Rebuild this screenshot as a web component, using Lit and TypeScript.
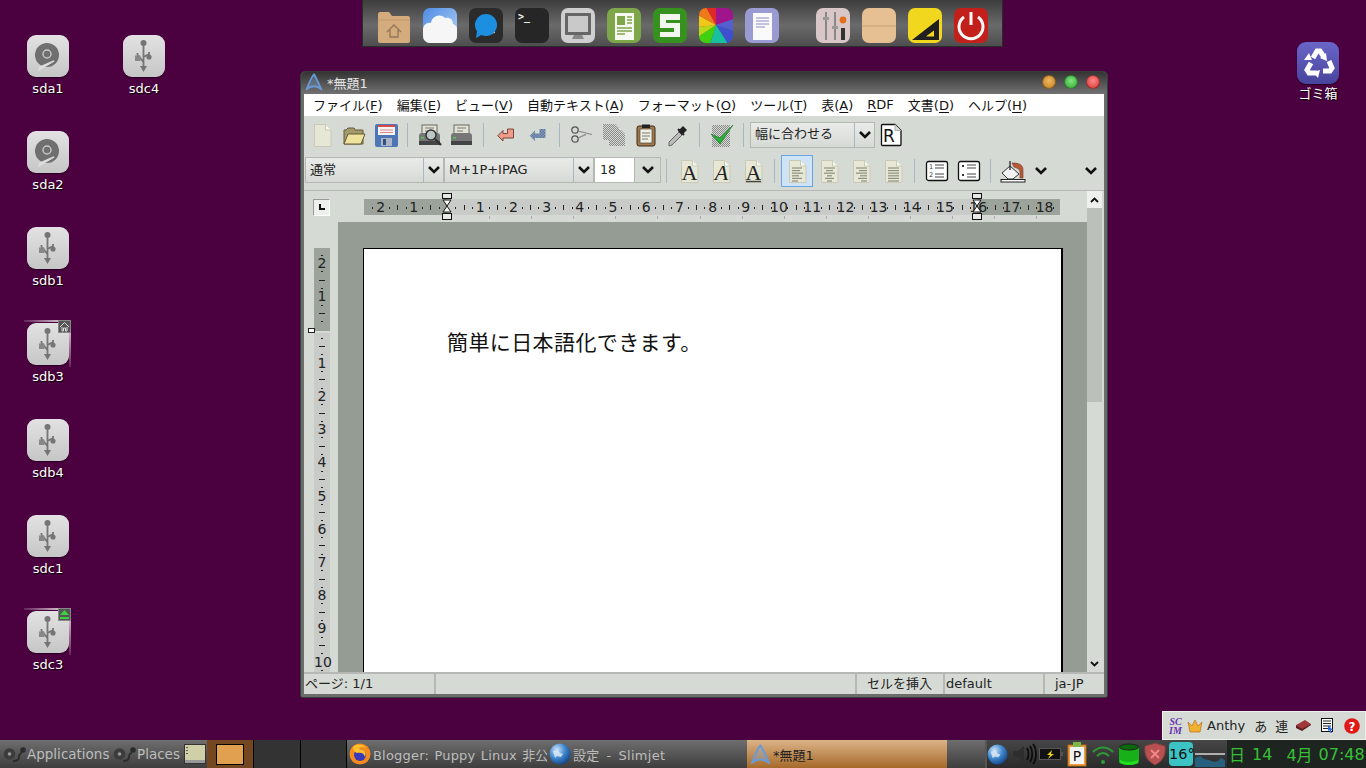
import { LitElement, html, css, svg } from "lit";
import { customElement } from "lit/decorators.js";

const I = (w: number, h: number, body: unknown, vb = `0 0 ${w} ${h}`) =>
  html`<svg width=${w} height=${h} viewBox=${vb} style="display:block;flex:none">${body}</svg>`;

const usb = svg`<g fill="#757575" stroke="#757575"><circle cx="20.5" cy="8" r="3" stroke="none"/>
<path d="M20.5 9V33M20.5 27L14.5 20V18M20.5 22L26 19V17" fill="none" stroke-width="1.8"/>
<rect x="12" y="20.5" width="5.5" height="5.5" stroke="none" fill="#888"/><circle cx="26" cy="22" r="2.6" stroke="none"/>
<path d="M17 31H24L20.5 37Z" stroke="none"/></g>`;
const hdd = svg`<circle cx="20" cy="20" r="12" fill="#6f6f6f"/><circle cx="20" cy="19" r="4" fill="none" stroke="#c8c8c8" stroke-width="1.4"/>
<path d="M12 35L27 26L13 32Z" fill="#ddd" stroke="#ddd" stroke-width="1.4"/>`;

const deskIcons = [
  { n: "sda1", x: 27, y: 35, g: hdd },
  { n: "sda2", x: 27, y: 131, g: hdd },
  { n: "sdb1", x: 27, y: 227, g: usb },
  { n: "sdb3", x: 27, y: 323, g: usb, b: "home" },
  { n: "sdb4", x: 27, y: 419, g: usb },
  { n: "sdc1", x: 27, y: 515, g: usb },
  { n: "sdc3", x: 27, y: 611, g: usb, b: "eject" },
  { n: "sdc4", x: 123, y: 35, g: usb },
];

const rr = (fill: string, stroke = "none") => svg`<rect x="1" y="1" width="34" height="35" rx="7" fill=${fill} stroke=${stroke}/>`;
const dock = [
  svg`<path d="M2 7a2 2 0 0 1 2-2h9l3 4h16a2 2 0 0 1 2 2v23a2 2 0 0 1-2 2H4a2 2 0 0 1-2-2z" fill="#d3ab7c"/><path d="M2 13h32" stroke="#c39a6b"/><path d="M11 25l7-7 7 7M14 23v7h8v-7" fill="none" stroke="#94775a" stroke-width="1.4"/>`,
  svg`<defs><linearGradient id="dk1" x1="0" y1="0" x2="1" y2="1"><stop offset="0" stop-color="#4d8be4"/><stop offset="1" stop-color="#b7d4f4"/></linearGradient></defs>${rr("url(#dk1)")}<path d="M1 29V23c0-5 4-8 8-7 1-7 9-10 14-5 5-1 8 2 8 6 3 1 4 3 4 5v7a7 7 0 0 1-7 7H8a7 7 0 0 1-7-7z" fill="#f6f6f6"/>`,
  svg`${rr("#2b2b2b")}<path d="M24 16L27 26l-6 1z" fill="#ddd"/><circle cx="18" cy="18" r="11" fill="#1d8fe0"/><path d="M9 24l-1 7 7-4z" fill="#1d8fe0"/>`,
  svg`${rr("#262626")}<text x="4" y="13" font-family="DejaVu Sans Mono" font-size="10" font-weight="bold" fill="#eee">&gt;_</text>`,
  svg`${rr("#cfcfcf")}<rect x="5" y="6" width="26" height="22" rx="1" fill="#666"/><rect x="8" y="9" width="20" height="16" fill="#c9c9c9"/><path d="M14 28h8l2 4H12z" fill="#888"/>`,
  svg`${rr("#7ea74a")}<rect x="9" y="6" width="19" height="27" fill="#f8f8f2"/><rect x="11" y="9" width="8" height="9" fill="#7ea74a"/><path d="M21 10h5M21 13h5M21 16h5M11 21h15M11 24h15M11 27h8" stroke="#7ea74a" stroke-width="1.3"/>`,
  svg`${rr("#37911e")}<path d="M8 7H28V13H14V16H28V30H8V25H22V21H8Z" fill="#f2f6ee"/>`,
  svg`<defs><clipPath id="dk8"><rect x="1" y="1" width="34" height="35" rx="7"/></clipPath></defs><g clip-path="url(#dk8)"><path d="M18 18L18 0H36V12Z" fill="#a0148c"/><path d="M18 18L36 12V24Z" fill="#5560d0"/><path d="M18 18L36 24V37H30Z" fill="#3e4fd0"/><path d="M18 18L30 37H12Z" fill="#18c0a0"/><path d="M18 18L12 37H0V30Z" fill="#40d010"/><path d="M18 18L0 30V20Z" fill="#b8d818"/><path d="M18 18L0 20V8Z" fill="#f0c818"/><path d="M18 18L0 8V0H8Z" fill="#f07818"/><path d="M18 18L8 0H18Z" fill="#e02828"/></g>`,
  svg`${rr("#9b9bd3")}<rect x="9" y="6" width="19" height="27" fill="#fafafa"/><path d="M12 11h13M12 14h13M12 17h13M12 20h9" stroke="#8a8ac4" stroke-width="1.2"/>`,
  svg`${rr("#d9c6c6")}<path d="M11 5v28M20 5v28" stroke="#888" stroke-width="2"/><rect x="8" y="10" width="6" height="3" fill="#999"/><rect x="17" y="19" width="6" height="3" fill="#999"/><circle cx="28" cy="13" r="3.4" fill="#e0701c"/><rect x="26" y="21" width="4" height="12" fill="#333"/>`,
  svg`${rr("#e6bf92")}<path d="M1 19h34" stroke="#c9a277"/>`,
  svg`${rr("#f1d81e")}<path d="M5 33L32 12V33Z M20 29h7v-5z" fill="#1f1f1f" fill-rule="evenodd"/><path d="M19 29.5h8v-6z" fill="#f1d81e"/>`,
  svg`${rr("#c4201b")}<path d="M11 10a12 12 0 1 0 14 0" fill="none" stroke="#f8f8f8" stroke-width="3"/><path d="M18 5v13" stroke="#f8f8f8" stroke-width="3"/>`,
];

const page = (inner: unknown = "") => svg`<path d="M4.5 1.5H15.5L21 7V23.5H4.5Z" fill="#e7e7d6" stroke="#c9c9b6"/><path d="M15.5 1.5V7H21" fill="#f8f8f0" stroke="#c9c9b6"/>${inner}`;
const lines = (rows: [number, number][]) => svg`${rows.map(([a, b], i) => svg`<path d=${`M${a} ${9 + i * 2.6}H${b}`} stroke="#8f8f80" stroke-width="1.2"/>`)}`;
const serifA = (italic: boolean, under = false) => svg`<text x="12.5" y="20.5" text-anchor="middle" font-family="Liberation Serif" font-size="22" font-style=${italic ? "italic" : "normal"} fill="#222">A</text>${under ? svg`<path d="M5 22.5h15" stroke="#444" stroke-width="1.4"/>` : ""}`;
const checker = (id: string) => svg`<defs><pattern id=${id} width="2" height="2" patternUnits="userSpaceOnUse"><rect width="2" height="2" fill="#d6dad5"/><rect width="1" height="1" fill="#8a8a8a"/><rect x="1" y="1" width="1" height="1" fill="#8a8a8a"/></pattern></defs>`;
const printer = svg`<rect x="5" y="2" width="15" height="10" fill="#e4e4d4" stroke="#666"/><path d="M8 5h9M8 8h6" stroke="#777"/><path d="M2 13a3 3 0 0 1 3-3h15a3 3 0 0 1 3 3v7H2z" fill="#777"/><rect x="2" y="18" width="21" height="4" fill="#444"/><rect x="4" y="14" width="3" height="1.5" fill="#5c5"/>`;

const ti = {
  newdoc: I(24, 24, page()),
  open: I(24, 24, svg`<path d="M2 21V7h2l2-2h6l1 2h8v14z" fill="#a39a6c" stroke="#645c3a"/><path d="M2 21l4-10h17l-4 10z" fill="#efe29c" stroke="#645c3a"/>`),
  save: I(24, 24, svg`<rect x="1" y="1" width="23" height="23" rx="2" fill="#4e75b6"/><rect x="4" y="2" width="17" height="10" fill="#f4f4f4"/><rect x="4" y="2" width="17" height="2" fill="#d84a4a"/><path d="M6 7h13M6 9.5h13" stroke="#d88"/><rect x="7" y="15" width="11" height="8" fill="#aab4c6"/><rect x="9" y="16" width="3" height="6" fill="#34507e"/>`),
  preview: I(26, 24, svg`${printer}<circle cx="14" cy="12" r="5" fill="#bcc8c8" stroke="#333" stroke-width="1.5"/><path d="M18 16l6 6" stroke="#333" stroke-width="2.4"/>`),
  print: I(26, 24, printer),
  undo: I(18, 18, svg`<path d="M1 13l7-7v4h6V4h8v12H8v4z" fill="#ee9a88" stroke="#6c3a30" stroke-width="1.200"/>`, "0 0 24 24"),
  redo: I(18, 18, svg`<defs><pattern id="c1b" width="2" height="2" patternUnits="userSpaceOnUse"><rect width="2" height="2" fill="#9fb2cc"/><rect width="1" height="1" fill="#445f8a"/><rect x="1" y="1" width="1" height="1" fill="#445f8a"/></pattern></defs><path d="M1 13l7-7v4h6V4h8v12H8v4z" fill="url(#c1b)"/>`, "0 0 24 24"),
  cut: I(24, 24, svg`<circle cx="5" cy="7" r="3.2" fill="none" stroke="#555" stroke-width="1.3"/><circle cx="5" cy="16" r="3.2" fill="none" stroke="#555" stroke-width="1.3"/><path d="M8 8l14 3.5M8 15l8-3.6" stroke="#888" stroke-width="1.2"/>`),
  copy: I(26, 26, svg`${checker("c2")}<path d="M2 2h12l4 4v12H2z M8 8h12l4 4v12H8z" fill="url(#c2)"/>`),
  paste: I(24, 24, svg`<rect x="3" y="3" width="18" height="20" rx="2" fill="#a5794e" stroke="#3c2a18"/><rect x="6" y="6" width="12" height="14" fill="#efefe2" stroke="#333" stroke-width=".6"/><rect x="8" y="1.5" width="8" height="3.5" fill="#222"/><path d="M8 10h8M8 13h8M8 16h6" stroke="#777"/>`),
  dropper: I(24, 24, svg`<path d="M3 23l3-1 10-10-3-3L3 19z" fill="#bbb" stroke="#666"/><path d="M12 8l5-5 4 4-5 5z" fill="#222"/><path d="M12 6l6 6" stroke="#222" stroke-width="2"/>`),
  check: I(24, 26, svg`${checker("c3")}<rect x="2" y="3" width="18" height="22" fill="url(#c3)"/><path d="M1 12l9 10L23 3 10 16z" fill="#28b038" stroke="#146c20" stroke-width=".6"/>`),
  rdoc: I(22, 24, svg`<path d="M1.5 2.5a1 1 0 0 1 1-1H15l6 6v14a1 1 0 0 1-1 1H2.5a1 1 0 0 1-1-1z" fill="#fff" stroke="#111" stroke-width="1.3"/><path d="M15 1.5V7.500H21" fill="#ddd" stroke="#aaa"/><text x="3" y="19" font-family="DejaVu Sans" font-size="17" fill="#111">R</text>`),
  ab: I(24, 24, svg`${page()}${serifA(false)}`),
  ai: I(24, 24, svg`${page()}${serifA(true)}`),
  au: I(24, 24, svg`${page()}${serifA(false, true)}`),
  al: I(24, 24, page(lines([[7, 17], [7, 15], [7, 18], [7, 14], [7, 17], [7, 13]]))),
  ac: I(24, 24, page(lines([[7, 18], [9, 16], [7, 18], [10, 15], [8, 17], [10, 15]]))),
  ar: I(24, 24, page(lines([[7, 18], [10, 18], [7, 18], [11, 18], [9, 18], [12, 18]]))),
  aj: I(24, 24, page(lines([[7, 18], [7, 18], [7, 18], [7, 18], [7, 18], [7, 18]]))),
  num: I(24, 22, svg`<rect x="1.500" y="1.500" width="21" height="19" rx="2" fill="#fff" stroke="#111" stroke-width="1.3"/><text x="4" y="9" font-family="DejaVu Sans" font-size="6.500" fill="#333">1</text><text x="4" y="17" font-family="DejaVu Sans" font-size="6.500" fill="#333">2</text><path d="M10 5h9M10 8h9M10 14h9M10 17h9" stroke="#444"/>`),
  bul: I(24, 22, svg`<rect x="1.500" y="1.500" width="21" height="19" rx="2" fill="#fff" stroke="#111" stroke-width="1.3"/><path d="M5 6h2M5 15h2" stroke="#333" stroke-width="2"/><path d="M10 5h9M10 8h9M10 14h9M10 17h9" stroke="#444"/>`),
  bucket: I(26, 24, svg`<path d="M2 14l8-7 9 8-6 5H8z" fill="#f2f2f2" stroke="#333"/><path d="M10 2v9" stroke="#333" stroke-width="1.4"/><path d="M12 4c6 0 11 1 11 7v8h-3v-6c0-3-3-4-6-5z" fill="#b85a3a" stroke="#70321e" stroke-width=".6"/><rect x="1" y="20.500" width="24" height="2.500" fill="#fff" stroke="#222"/>`),
};
const chev = I(14, 10, svg`<path d="M2 2l5 5 5-5" fill="none" stroke="#111" stroke-width="2.6"/>`);

const sep = html`<span class="sep"></span>`;
const btn = (i: unknown, on = false) => html`<span class=${on ? "tb on" : "tb"}>${i}</span>`;
const menu: [string, string, string][] = [
  ["ファイル(", "F", ")"], ["編集(", "E", ")"], ["ビュー(", "V", ")"], ["自動テキスト(", "A", ")"], ["フォーマット(", "O", ")"],
  ["ツール(", "T", ")"], ["表(", "A", ")"], ["", "R", "DF"], ["文書(", "D", ")"], ["ヘルプ(", "H", ")"],
];

const globe = (id: string, s: number) => I(s, s, svg`<defs><radialGradient id=${id} cx=".35" cy=".3" r=".8"><stop offset="0" stop-color="#cfe6f8"/><stop offset=".5" stop-color="#3f86cc"/><stop offset="1" stop-color="#0d3c80"/></radialGradient></defs><circle cx="11" cy="11" r="10.500" fill=${`url(#${id})`}/><path d="M4 8l5-1 2 3 3 1-2 3-4-1-2 2z" fill="#d8e8f4" opacity=".85"/>`, "0 0 22 22");
const appA = (s: number) => I(s, s, svg`<path d="M2 20C5 12 8 5 11 1.500c3 5 6 12 9 18.500-5-5-13-5-18 0z" fill="rgba(130,175,230,.3)" stroke="#6a9ad8" stroke-width="2.200" stroke-linejoin="round"/>`, "0 0 22 22");
const mouse = I(23, 16, svg`<circle cx="6.500" cy="8" r="5.800" fill="#3c3c3c"/><circle cx="6.500" cy="8" r="1.800" fill="#999"/><path d="M10 15c3 0 6-1 6-4s2-4 3-4" fill="none" stroke="#2c2c2c" stroke-width="2"/><circle cx="20" cy="4" r="2.800" fill="#2c2c2c"/>`);

const hNums = [-2, -1, 1, 2, 3, 4, 5, 6, 7, 8, 9, 10, 11, 12, 13, 14, 15, 16, 17, 18];
const cm = 33.2;
const hTicks: { x: number; big: boolean }[] = [];
for (let i = -3; i <= 18; i++) {
  for (const [f, big] of [[0.25, false], [0.5, true], [0.75, false]] as [number, boolean][]) {
    const p = 83 + (i + f) * cm;
    if (p > 1 && p < 695) hTicks.push({ x: p, big });
  }
}
const vNums = [-2, -1, 1, 2, 3, 4, 5, 6, 7, 8, 9, 10];
const vTicks: { y: number; big: boolean }[] = [];
for (let i = -3; i <= 10; i++) {
  for (const [f, big] of [[0.25, false], [0.5, true], [0.75, false]] as [number, boolean][]) {
    const p = 81.5 + (i + f) * cm;
    if (p > 0 && p < 424) vTicks.push({ y: p, big });
  }
}
const lowTicks = Array.from({ length: 14 }, (_, i) => 125 + i * 42.1);

@customElement("app-root")
export class AppRoot extends LitElement {
  static styles = css`
    :host { display: flex; flex-direction: column; width: 1366px; height: 768px; overflow: hidden; background: #4b003f; font-family: "DejaVu Sans", "Noto Sans CJK JP", sans-serif; }
    .desktop { position: relative; flex: 1; }
    .dock { position: absolute; left: 362px; top: 0; width: 641px; height: 47px; box-sizing: border-box; display: flex; align-items: flex-start; padding: 7px 0 0 13px; gap: 10px; background: linear-gradient(#3d3d3d, #6a6a6a 55%, #4e4e4e); border: 1px solid #2b2b2b; border-top: 0; }
    .dock .gapd { width: 15px; margin-left: 0; }
    .di { position: absolute; width: 42px; }
    .tile { width: 42px; height: 42px; border-radius: 9px; background: linear-gradient(#e2e2e2, #c6c6c6); box-shadow: 0 1px 1px rgba(0,0,0,.5); }
    .di span { position: absolute; top: 45px; left: -20px; width: 82px; text-align: center; color: #fff; font-size: 13px; line-height: 17px; text-shadow: 1px 1px 1px #000; }
    .di.trash span { top: 43px; }
    .glow { position: absolute; left: -3px; top: -3px; width: 47px; height: 47px; border-top: 2px solid #d9c8d4; border-right: 2px solid #d9c8d4; box-sizing: border-box; -webkit-mask: linear-gradient(45deg, transparent 40%, #000 90%); mask: linear-gradient(45deg, transparent 40%, #000 90%); }
    .badge { position: absolute; left: 31px; top: -3px; width: 13px; height: 13px; background: #555; border: 1px solid #888; box-sizing: border-box; }
    .trash .tile { background: linear-gradient(#6a66c8, #48449c); }
    .win { position: absolute; left: 301px; top: 72px; width: 806px; height: 625px; box-sizing: border-box; background: #d6dad5; border: 3px solid #6a6d6a; border-top: 0; border-radius: 4px 4px 2px 2px; display: flex; flex-direction: column; box-shadow: 0 0 0 1px #3c3c3c; }
    .title { height: 22px; margin: 0 -3px; flex: none; box-sizing: border-box; display: flex; align-items: center; background: linear-gradient(#343434, #727272); border-radius: 4px 4px 0 0; color: #e4e4e4; font-size: 13px; padding: 0 7px 2px 4px; gap: 4px; }
    .title b { font-weight: 400; flex: 1; }
    .dot { width: 14px; height: 14px; border-radius: 50%; margin-left: 4px; flex: none; box-sizing: border-box; border: 1px solid rgba(0,0,0,.35); }
    .menu { height: 22px; flex: none; box-sizing: border-box; background: #fff; display: flex; align-items: center; gap: 14px; padding: 0 0 2px 9px; font-size: 13px; color: #111; white-space: nowrap; }
    .menu u { text-underline-offset: 2px; }
    .row { flex: none; display: flex; align-items: center; box-sizing: border-box; }
    .r1 { height: 38px; padding: 0 0 1px 2px; }
    .r2 { height: 36px; padding: 0 0 2px 1px; }
    .r2 .combo { margin-top: -2px; }
    .r2 .combo .t { margin-top: 0; }
    .tb { width: 32px; height: 32px; display: flex; align-items: center; justify-content: center; flex: none; box-sizing: border-box; }
    .tb.on { background: #cfe3f7; border: 1px solid #6aa5e0; }
    .sep { width: 1px; height: 24px; background: #a9b6c4; margin: 0 6px 0 5px; flex: none; }
    .combo { height: 26px; box-sizing: border-box; border: 1px solid #b4b8b3; background: linear-gradient(#e9ebe8, #d6dad5); display: flex; align-items: center; font-size: 13px; color: #222; flex: none; }
    .combo .t { flex: 1; padding-left: 4px; white-space: nowrap; overflow: hidden; line-height: 22px; margin-top: -2px; }
    .combo .a { width: 20px; height: 100%; display: flex; align-items: center; justify-content: center; border-left: 1px solid #a9b6c4; box-sizing: border-box; }
    .main { flex: 1; min-height: 0; display: flex; border-top: 1px solid #b5b8b4; overflow: hidden; }
    .left { flex: none; width: 783px; display: flex; flex-direction: column; }
    .hr { position: relative; height: 31px; flex: none; }
    .corner { position: absolute; left: 9px; top: 8px; width: 17px; height: 17px; box-sizing: border-box; background: #eef0ed; border: 1px solid #999; border-right-color: #fff; border-bottom-color: #fff; }
    .corner::after { content: ""; position: absolute; left: 5px; top: 4px; width: 6px; height: 6px; border-left: 2px solid #111; border-bottom: 2px solid #111; box-sizing: border-box; }
    .band { position: absolute; left: 60px; top: 8px; width: 696px; height: 16px; background: linear-gradient(90deg, #9ba39b 0 83px, #c9cbc9 83px 613px, #9ba39b 613px); font-size: 14px; color: #222; }
    .band i { position: absolute; top: 0; font-style: normal; line-height: 16px; transform: translateX(-50%); letter-spacing: 0; }
    .band s { position: absolute; width: 1px; background: #222; }
    .low { position: absolute; top: 25px; width: 1px; height: 3px; background: #aaa; }
    .marker { position: absolute; top: 2px; width: 10px; transform: translateX(-50%); }
    .body { flex: 1; min-height: 0; display: flex; }
    .vr { position: relative; width: 34px; flex: none; }
    .vband { position: absolute; left: 10px; top: 26px; width: 16px; height: 424px; background: linear-gradient(#9ba39b 0 83px, #d6dad5 83px 85px, #c9cbc9 85px); font-size: 14px; color: #222; }
    .vband i { position: absolute; left: 0; width: 16px; text-align: center; font-style: normal; line-height: 16px; transform: translateY(-50%); white-space: nowrap; }
    .vband s { position: absolute; background: #222; height: 1px; }
    .vmark { position: absolute; left: 4px; top: 106px; width: 7px; height: 5px; box-sizing: border-box; border: 1px solid #222; background: #fff; }
    .work { flex: 1; background: #949c94; padding: 26px 25px 0; overflow: hidden; }
    .page { background: #fff; height: 600px; width: 700px; box-sizing: border-box; border: 1px solid #000; border-right-width: 2px; padding: 78px 0 0 83px; font: 21px/28px "Noto Sans CJK JP", sans-serif; letter-spacing: .4px; color: #111; white-space: nowrap; }
    .sb { width: 15px; flex: none; display: flex; flex-direction: column; background: #d6dad5; }
    .sb .ar { height: 17px; display: flex; align-items: center; justify-content: center; background: #eef0ed; flex: none; }
    .sb .th { height: 194px; flex: none; background: #bcc0bb; }
    .sb .rest { flex: 1; }
    .status { height: 22px; flex: none; display: flex; border-top: 2px solid #b5b8b4; box-sizing: border-box; font-size: 13px; color: #222; }
    .status div { box-sizing: border-box; border-right: 2px solid #b5b8b4; line-height: 20px; white-space: nowrap; flex: none; }
    .ime { position: absolute; right: 0; bottom: 0; width: 204px; height: 29px; box-sizing: border-box; background: #d6dad5; border: 1px solid #eef0ed; display: flex; align-items: center; font: 13px "DejaVu Sans", "Noto Sans CJK JP", sans-serif; color: #222; white-space: nowrap; padding-left: 3px; }
    .scim { font: italic bold 10px/9px "Liberation Serif", serif; color: #6a32b0; width: 19px; text-align: center; flex: none; }
    .bar { height: 28px; flex: none; display: flex; background: linear-gradient(#6e6e6e, #3e3e3e); color: #bdbdbd; font-size: 13.500px; white-space: nowrap; }
    .bar .m { display: flex; align-items: center; gap: 1px; flex: none; box-sizing: border-box; }
    .pg { width: 47px; flex: none; background: #333; border-right: 1px solid #000; box-sizing: border-box; }
    .pg.cur { background: #754720; display: flex; align-items: center; justify-content: center; }
    .pg.cur b { display: block; width: 26px; height: 19px; background: #e0a050; border: 1px solid #000; }
    .task { width: 200px; flex: none; display: flex; align-items: center; gap: 2px; padding-left: 2px; box-sizing: border-box; overflow: hidden; letter-spacing: .2px; font-size: 13px; word-spacing: 1px; }
    .task.t2 { letter-spacing: .3px; word-spacing: 2.500px; }
    .task.act { background: linear-gradient(#dcb388, #a66a2a); color: #222; padding-left: 3px; letter-spacing: 0; }
    .tray { flex: none; width: 381px; margin-left: 38px; display: flex; align-items: center; background: linear-gradient(#464646, #2a2a2a); box-sizing: border-box; border-left: 2px solid #555; }
    .deg { width: 24px; height: 24px; background: #3cc4c4; border-radius: 4px; color: #111; font-size: 14.500px; text-align: center; line-height: 24px; flex: none; }
    .clock { flex: 1; display: flex; background: #1e2420; color: #38c038; font-size: 16px; height: 100%; align-items: center; padding-left: 2px; }
  `;

  render() {
    return html`
      <div class="desktop">
        <div class="dock">
          ${dock.map((d, i) => html`${i === 9 ? html`<span class="gapd"></span>` : ""}${I(36, 37, d)}`)}
        </div>
        ${deskIcons.map((d) => html`
          <div class="di" style=${`left:${d.x}px;top:${d.y}px`}>
            ${d.b ? html`<div class="glow"></div>` : ""}
            <div class="tile">${I(42, 42, d.g)}</div>
            ${d.b === "home" ? html`<div class="badge">${I(11, 11, svg`<path d="M1 6l4.500-4.500L10 6M3 6v4h1.500V7h2v3H8V6" fill="none" stroke="#ddd" stroke-width="1"/>`)}</div>` : ""}
            ${d.b === "eject" ? html`<div class="badge">${I(11, 11, svg`<path d="M1 6L5.500 1 10 6Z M1 8h9v2H1z" fill="#3fd03f"/>`)}</div>` : ""}
            <span>${d.n}</span>
          </div>`)}
        <div class="di trash" style="left:1297px;top:42px">
          <div class="tile">${I(42, 42, svg`<g fill="none" stroke="#fff" stroke-width="5"><path d="M16 16l4-7h3l4 6"/><path d="M32 19l3 7-2 3h-7"/><path d="M20 31h-8l-2-3 4-7"/></g><path d="M29 11l1 8-7-3zM21 36l-5-6 7-2zM7 18l8 0-3-7z" fill="#fff"/>`)}</div>
          <span>ゴミ箱</span>
        </div>

        <div class="win">
          <div class="title">
            ${appA(18)}
            <b>*無題1</b>
            <span class="dot" style="background:radial-gradient(circle at 50% 40%,#f0b860,#c08020)"></span>
            <span class="dot" style="background:radial-gradient(circle at 50% 40%,#80e880,#30a030)"></span>
            <span class="dot" style="background:radial-gradient(circle at 50% 40%,#ff8a8a,#d83030)"></span>
          </div>
          <div class="menu">
            ${menu.map(([a, u, b]) => html`<span>${a}<u>${u}</u>${b}</span>`)}
          </div>
          <div class="row r1">
            ${btn(ti.newdoc)}${btn(ti.open)}${btn(ti.save)}${sep}
            ${btn(ti.preview)}${btn(ti.print)}${sep}
            ${btn(ti.undo)}${btn(ti.redo)}${sep}
            ${btn(ti.cut)}${btn(ti.copy)}${btn(ti.paste)}${btn(ti.dropper)}${sep}
            ${btn(ti.check)}${sep}
            <div class="combo" style="width:125px"><span class="t">幅に合わせる</span><span class="a">${chev}</span></div>
            ${btn(ti.rdoc)}
          </div>
          <div class="row r2">
            <div class="combo" style="width:139px"><span class="t">通常</span><span class="a">${chev}</span></div>
            <div class="combo" style="width:150px"><span class="t">M+1P+IPAG</span><span class="a">${chev}</span></div>
            <div class="combo" style="width:67px;background:#fff"><span class="t" style="font-size:12.500px;padding-left:5px">18</span><span class="a" style="width:26px;background:#d6dad5;border-left-color:#b4b8b3">${chev}</span></div>
            <span class="sep"></span>
            ${btn(ti.ab)}${btn(ti.ai)}${btn(ti.au)}${sep}
            ${btn(ti.al, true)}${btn(ti.ac)}${btn(ti.ar)}${btn(ti.aj)}${sep}
            ${btn(ti.num)}${btn(ti.bul)}${sep}
            ${btn(ti.bucket)}
            <span class="tb" style="width:24px">${chev}</span>
            <span class="tb" style="margin-left:24px;width:28px">${chev}</span>
          </div>
          <div class="main">
            <div class="left">
              <div class="hr">
                <div class="corner"></div>
                <div class="band">
                  ${hNums.map((n) => html`<i style=${`left:${83 + n * cm}px`}>${Math.abs(n)}</i>`)}
                  ${hTicks.map((t) => html`<s style=${`left:${t.x.toFixed(0)}px;top:${t.big ? 6 : 7.5}px;height:${t.big ? 5 : 2}px`}></s>`)}
                </div>
                ${lowTicks.map((x) => html`<span class="low" style=${`left:${60 + x}px`}></span>`)}
                ${[143, 673].map((x) => html`<span class="marker" style=${`left:${x}px`}>${I(11, 28, svg`<rect x=".5" y=".5" width="9" height="5" fill="#e8e8e8" stroke="#111"/><path d="M1 7h8L1 19h8z" fill="#fff" stroke="#111"/><rect x=".5" y="20.500" width="9" height="6" fill="#e8e8e8" stroke="#111"/>`)}</span>`)}
              </div>
              <div class="body">
                <div class="vr">
                  <div class="vband">
                    ${vNums.map((n) => html`<i style=${`top:${81.5 + n * cm}px`}>${Math.abs(n)}</i>`)}
                    ${vTicks.map((t) => html`<s style=${`top:${t.y.toFixed(0)}px;left:${t.big ? 5 : 7}px;width:${t.big ? 6 : 2}px`}></s>`)}
                  </div>
                  <div class="vmark"></div>
                </div>
                <div class="work"><div class="page">簡単に日本語化できます。</div></div>
              </div>
            </div>
            <div class="sb">
              <div class="ar">${I(9, 6, svg`<path d="M1 5l3.500-3.500L8 5" fill="none" stroke="#111" stroke-width="1.800"/>`)}</div>
              <div class="th"></div>
              <div class="rest"></div>
              <div class="ar" style="background:none">${I(9, 6, svg`<path d="M1 1l3.500 3.500L8 1" fill="none" stroke="#111" stroke-width="1.800"/>`)}</div>
            </div>
          </div>
          <div class="status">
            <div style="width:132px;padding-left:1px">ページ: 1/1</div>
            <div style="width:421px"></div>
            <div style="width:88px;padding-left:10px">セルを挿入</div>
            <div style="width:100px;padding-left:1px">default</div>
            <div style="width:59px;padding-left:10px;border:0">ja-JP</div>
          </div>
        </div>

        <div class="ime">
          <span class="scim">SC<br />IM</span>
          <span style="margin-left:2px">${I(16, 14, svg`<path d="M1 3l4 4 3-6 3 6 4-4-2 10H3z" fill="#f0b030" stroke="#c06a20" stroke-width=".7"/>`)}</span>
          <span style="margin-left:4px">Anthy</span>
          <span style="margin-left:9px">あ</span>
          <span style="margin-left:8px">連</span>
          <span style="margin-left:7px">${I(17, 13, svg`<path d="M1 6l9-5 6 4-9 6z" fill="#a03a3a"/><path d="M1 6v3l6 3 9-6V5l-9 5z" fill="#5c1c1c"/>`)}</span>
          <span style="margin-left:9px">${I(13, 15, svg`<rect x=".5" y=".5" width="11" height="13" fill="#fff" stroke="#111"/><path d="M2 3h8M2 5.500h8M2 8h8M2 10.500h5" stroke="#222"/><path d="M7 7l5 5-2 0 1 3-1.500 0-1-3-1.500 1z" fill="#2a6ae0"/>`)}</span>
          <span style="margin-left:10px">${I(16, 16, svg`<circle cx="8" cy="8" r="7.800" fill="#e01818"/><text x="8" y="12.500" text-anchor="middle" font-family="DejaVu Sans" font-weight="bold" font-size="12" fill="#fff">?</text>`)}</span>
        </div>
      </div>

      <div class="bar">
        <div class="m" style="padding-left:3px;width:112px">${mouse}<span>Applications</span></div>
        <div class="m" style="padding-left:1px;width:71px">${mouse}<span>Places</span></div>
        <div class="m" style="margin-left:1px;width:23px">${I(22, 20, svg`<rect x=".5" y=".5" width="21" height="19" fill="#cfd0a8" stroke="#333"/><rect x="1" y="16" width="20" height="3" fill="#999"/><path d="M3 3v1M3 6v1M3 9v1" stroke="#333" stroke-width="1.500"/>`)}</div>
        <div class="pg cur"><b></b></div><div class="pg"></div><div class="pg" style="width:46px"></div>
        <div class="task">
          ${I(22, 22, svg`<circle cx="11" cy="11" r="10.500" fill="#f78a1c"/><circle cx="11" cy="12" r="6" fill="#3a3ab8"/><path d="M4 4c3-4 11-3 13 1-4-2-7-1-7 1 5 0 8 3 6 8-1-4-4-5-8-4C5 9 4 7 4 4z" fill="#fbc02c"/>`)}
          <span>Blogger: Puppy Linux 非公</span>
        </div>
        <div class="task t2">
          ${globe("g1", 22)}
          <span>設定 - Slimjet</span>
        </div>
        <div class="task act">${appA(21)}<span>*無題1</span></div>
        <div class="tray">
          ${globe("g2", 21)}
          <span style="margin-left:5px">${I(24, 22, svg`<path d="M0 8h5l6-5v16l-6-5H0z" fill="#2e2e2e"/><path d="M14 5c2 3 2 9 0 12M17 3c3 4 3 12 0 16M20 1c4 5 4 15 0 20" fill="none" stroke="#0c0c0c" stroke-width="1.800"/>`)}</span>
          <span style="margin-left:2px">${I(24, 14, svg`<rect x=".5" y="1.500" width="21" height="11" fill="#111" stroke="#555"/><rect x="22" y="5" width="2" height="4" fill="#555"/><path d="M13 3L8 8h3l-2 4 6-5h-3z" fill="#e8d020"/>`)}</span>
          <span style="margin-left:4px">${I(20, 26, svg`<rect x="1" y="4" width="18" height="21" fill="#f0a040" stroke="#b06818"/><rect x="3" y="6" width="14" height="17" fill="#f4f4f4"/><rect x="6" y="1" width="8" height="5" fill="#7ab84a"/><text x="10" y="20" text-anchor="middle" font-family="DejaVu Sans" font-size="14" fill="#111">P</text>`)}</span>
          <span style="margin-left:4px">${I(24, 22, svg`<g fill="none" stroke="#2e9a34" stroke-width="2"><path d="M2 9c6-6 14-6 20 0"/><path d="M6 13c4-4 8-4 12 0"/></g><circle cx="12" cy="19" r="2" fill="#2e9a34"/>`)}</span>
          <span style="margin-left:4px">${I(20, 22, svg`<path d="M0 4v15a10 3 0 0 0 20 0V4z" fill="#18b018"/><ellipse cx="10" cy="4" rx="9.500" ry="3" fill="#0a6a0a" stroke="#222"/><path d="M1 16a9 3 0 0 0 18 0v3a9 3 0 0 1-18 0z" fill="#20e020"/>`)}</span>
          <span style="margin-left:5px">${I(22, 24, svg`<path d="M11 1l10 3c1 9-2 15-10 19C3 19 0 13 1 4z" fill="#b85050" stroke="#804040"/><path d="M7 8l8 8M15 8l-8 8" stroke="#e88" stroke-width="2"/>`)}</span>
          <span class="deg" style="margin-left:3px">16°</span>
          <span style="margin-left:2px;flex:none">${I(30, 26, svg`<path d="M0 26V17l5-2 4 3 5 1 5 2 4-1 3-3 4 2v7z" fill="#27607e"/><path d="M0 13h30" stroke="#fff" stroke-width="1.200"/>`)}</span>
          <div class="clock" style="margin-left:2px">
            <span>日</span><span style="margin-left:7px">14</span><span style="margin-left:14px">4月</span><span style="margin-left:6px">07:48</span>
          </div>
        </div>
      </div>
    `;
  }
}
